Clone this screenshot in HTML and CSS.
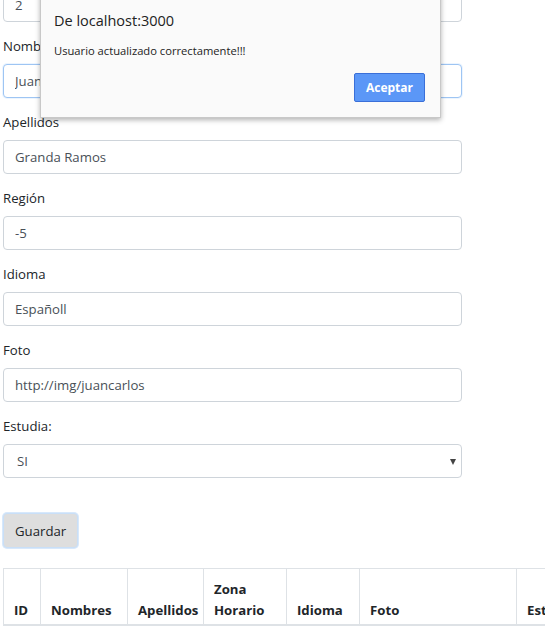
FILE: index.html
```html
<!DOCTYPE html>
<html lang="es">
<head>
<meta charset="utf-8">
<title>Usuarios</title>
<link rel="stylesheet" href="styles.css">
</head>
<body>
<div class="page">
  <form class="form">
    <div class="group first">
      <label class="label">ID</label>
      <input class="control" type="text" value="2">
    </div>
    <div class="group">
      <label class="label">Nombres</label>
      <input class="control focused" type="text" value="Juan Carlos">
    </div>
    <div class="group">
      <label class="label">Apellidos</label>
      <input class="control" type="text" value="Granda Ramos">
    </div>
    <div class="group">
      <label class="label">Región</label>
      <input class="control" type="text" value="-5">
    </div>
    <div class="group">
      <label class="label">Idioma</label>
      <input class="control" type="text" value="Españoll">
    </div>
    <div class="group">
      <label class="label">Foto</label>
      <input class="control" type="text" value="http://img/juancarlos">
    </div>
    <div class="group">
      <label class="label">Estudia:</label>
      <div class="select-wrap">
        <select class="control select">
          <option>SI</option>
          <option>NO</option>
        </select>
      </div>
    </div>
    <button type="button" class="btn-save">Guardar</button>
  </form>

  <table class="table">
    <colgroup>
      <col class="c-id"><col class="c-nom"><col class="c-ape"><col class="c-zona"><col class="c-idi"><col class="c-foto"><col class="c-est"><col class="c-acc">
    </colgroup>
    <thead>
      <tr>
        <th>ID</th>
        <th>Nombres</th>
        <th>Apellidos</th>
        <th>Zona Horario</th>
        <th>Idioma</th>
        <th>Foto</th>
        <th>Estudia</th>
        <th>Acciones</th>
      </tr>
    </thead>
  </table>
</div>

<div class="dialog">
  <div class="dialog-title">De localhost:3000</div>
  <div class="dialog-msg">Usuario actualizado correctamente!!!</div>
  <div class="dialog-actions">
    <button type="button" class="btn-ok">Aceptar</button>
  </div>
</div>
</body>
</html>
```

FILE: styles.css
```css
* { box-sizing: border-box; }

html, body {
  margin: 0;
  padding: 0;
  background: #ffffff;
  overflow: hidden;
}

body {
  font-family: "Open Sans", "Noto Sans", sans-serif;
  font-size: 13.2px;
  color: #212529;
  width: 545px;
  height: 626px;
}

.page {
  padding-left: 3px;
}

.form {
  width: 459px;
  margin-top: -40px;
}

.group {
  margin-bottom: 14px;
}

.label {
  display: block;
  line-height: 21px;
  margin-bottom: 7px;
  color: #212529;
}

.control {
  display: block;
  width: 100%;
  height: 34px;
  padding: 0 11px;
  font-family: inherit;
  font-size: 13.2px;
  color: #495057;
  background: #fff;
  border: 1px solid #ced4da;
  border-radius: 4px;
  outline: none;
}

.control.focused {
  border-color: #9ec5f3;
  box-shadow: 0 0 0 1px rgba(128, 189, 255, 0.15);
}

.select-wrap {
  position: relative;
}

.select {
  -webkit-appearance: none;
  appearance: none;
  padding-left: 13px;
}

.select-wrap::after {
  content: "";
  position: absolute;
  right: 6px;
  top: 15px;
  border-left: 3.5px solid transparent;
  border-right: 3.5px solid transparent;
  border-top: 6px solid #444;
  pointer-events: none;
}

.btn-save {
  display: block;
  margin-top: 35px;
  height: 35px;
  padding: 0 11px;
  font-family: inherit;
  font-size: 13.2px;
  color: #212529;
  background: #dedede;
  border: 1px solid #c9dff7;
  border-radius: 4px;
  box-shadow: 0 0 0 1px #d7e8fb;
}

.table {
  margin-top: 20px;
  border-collapse: collapse;
  table-layout: fixed;
  width: 720px;
}

.c-id { width: 37px; }
.c-nom { width: 87px; }
.c-ape { width: 76px; }
.c-zona { width: 83px; }
.c-idi { width: 73px; }
.c-foto { width: 157px; }
.c-est { width: 100px; }
.c-acc { width: 107px; }

.table th {
  text-align: left;
  vertical-align: bottom;
  font-weight: 700;
  line-height: 21px;
  padding: 10px 10px 3px 10px;
  border: 1px solid #dee2e6;
  border-bottom: 2px solid #dee2e6;
  color: #212529;
}

.dialog {
  position: absolute;
  left: 40px;
  top: -10px;
  width: 401px;
  height: 128px;
  background: #fafafa;
  border: 1px solid #c8c8c8;
  box-shadow: 0 2px 5px rgba(0, 0, 0, 0.3);
  font-family: "Open Sans", "Noto Sans", sans-serif;
  padding: 19px 15px 0 13px;
}

.dialog-title {
  font-size: 14.5px;
  line-height: 22px;
  color: #222;
}

.dialog-msg {
  margin-top: 11px;
  font-size: 11.2px;
  line-height: 16px;
  color: #222;
}

.dialog-actions {
  display: flex;
  justify-content: flex-end;
  margin-top: 14px;
}

.btn-ok {
  width: 71px;
  height: 29px;
  background: #5b97f7;
  border: 1px solid #3a6fd8;
  border-radius: 2px;
  color: #fff;
  font-family: inherit;
  font-size: 12px;
  font-weight: 700;
  padding: 0;
}
```
